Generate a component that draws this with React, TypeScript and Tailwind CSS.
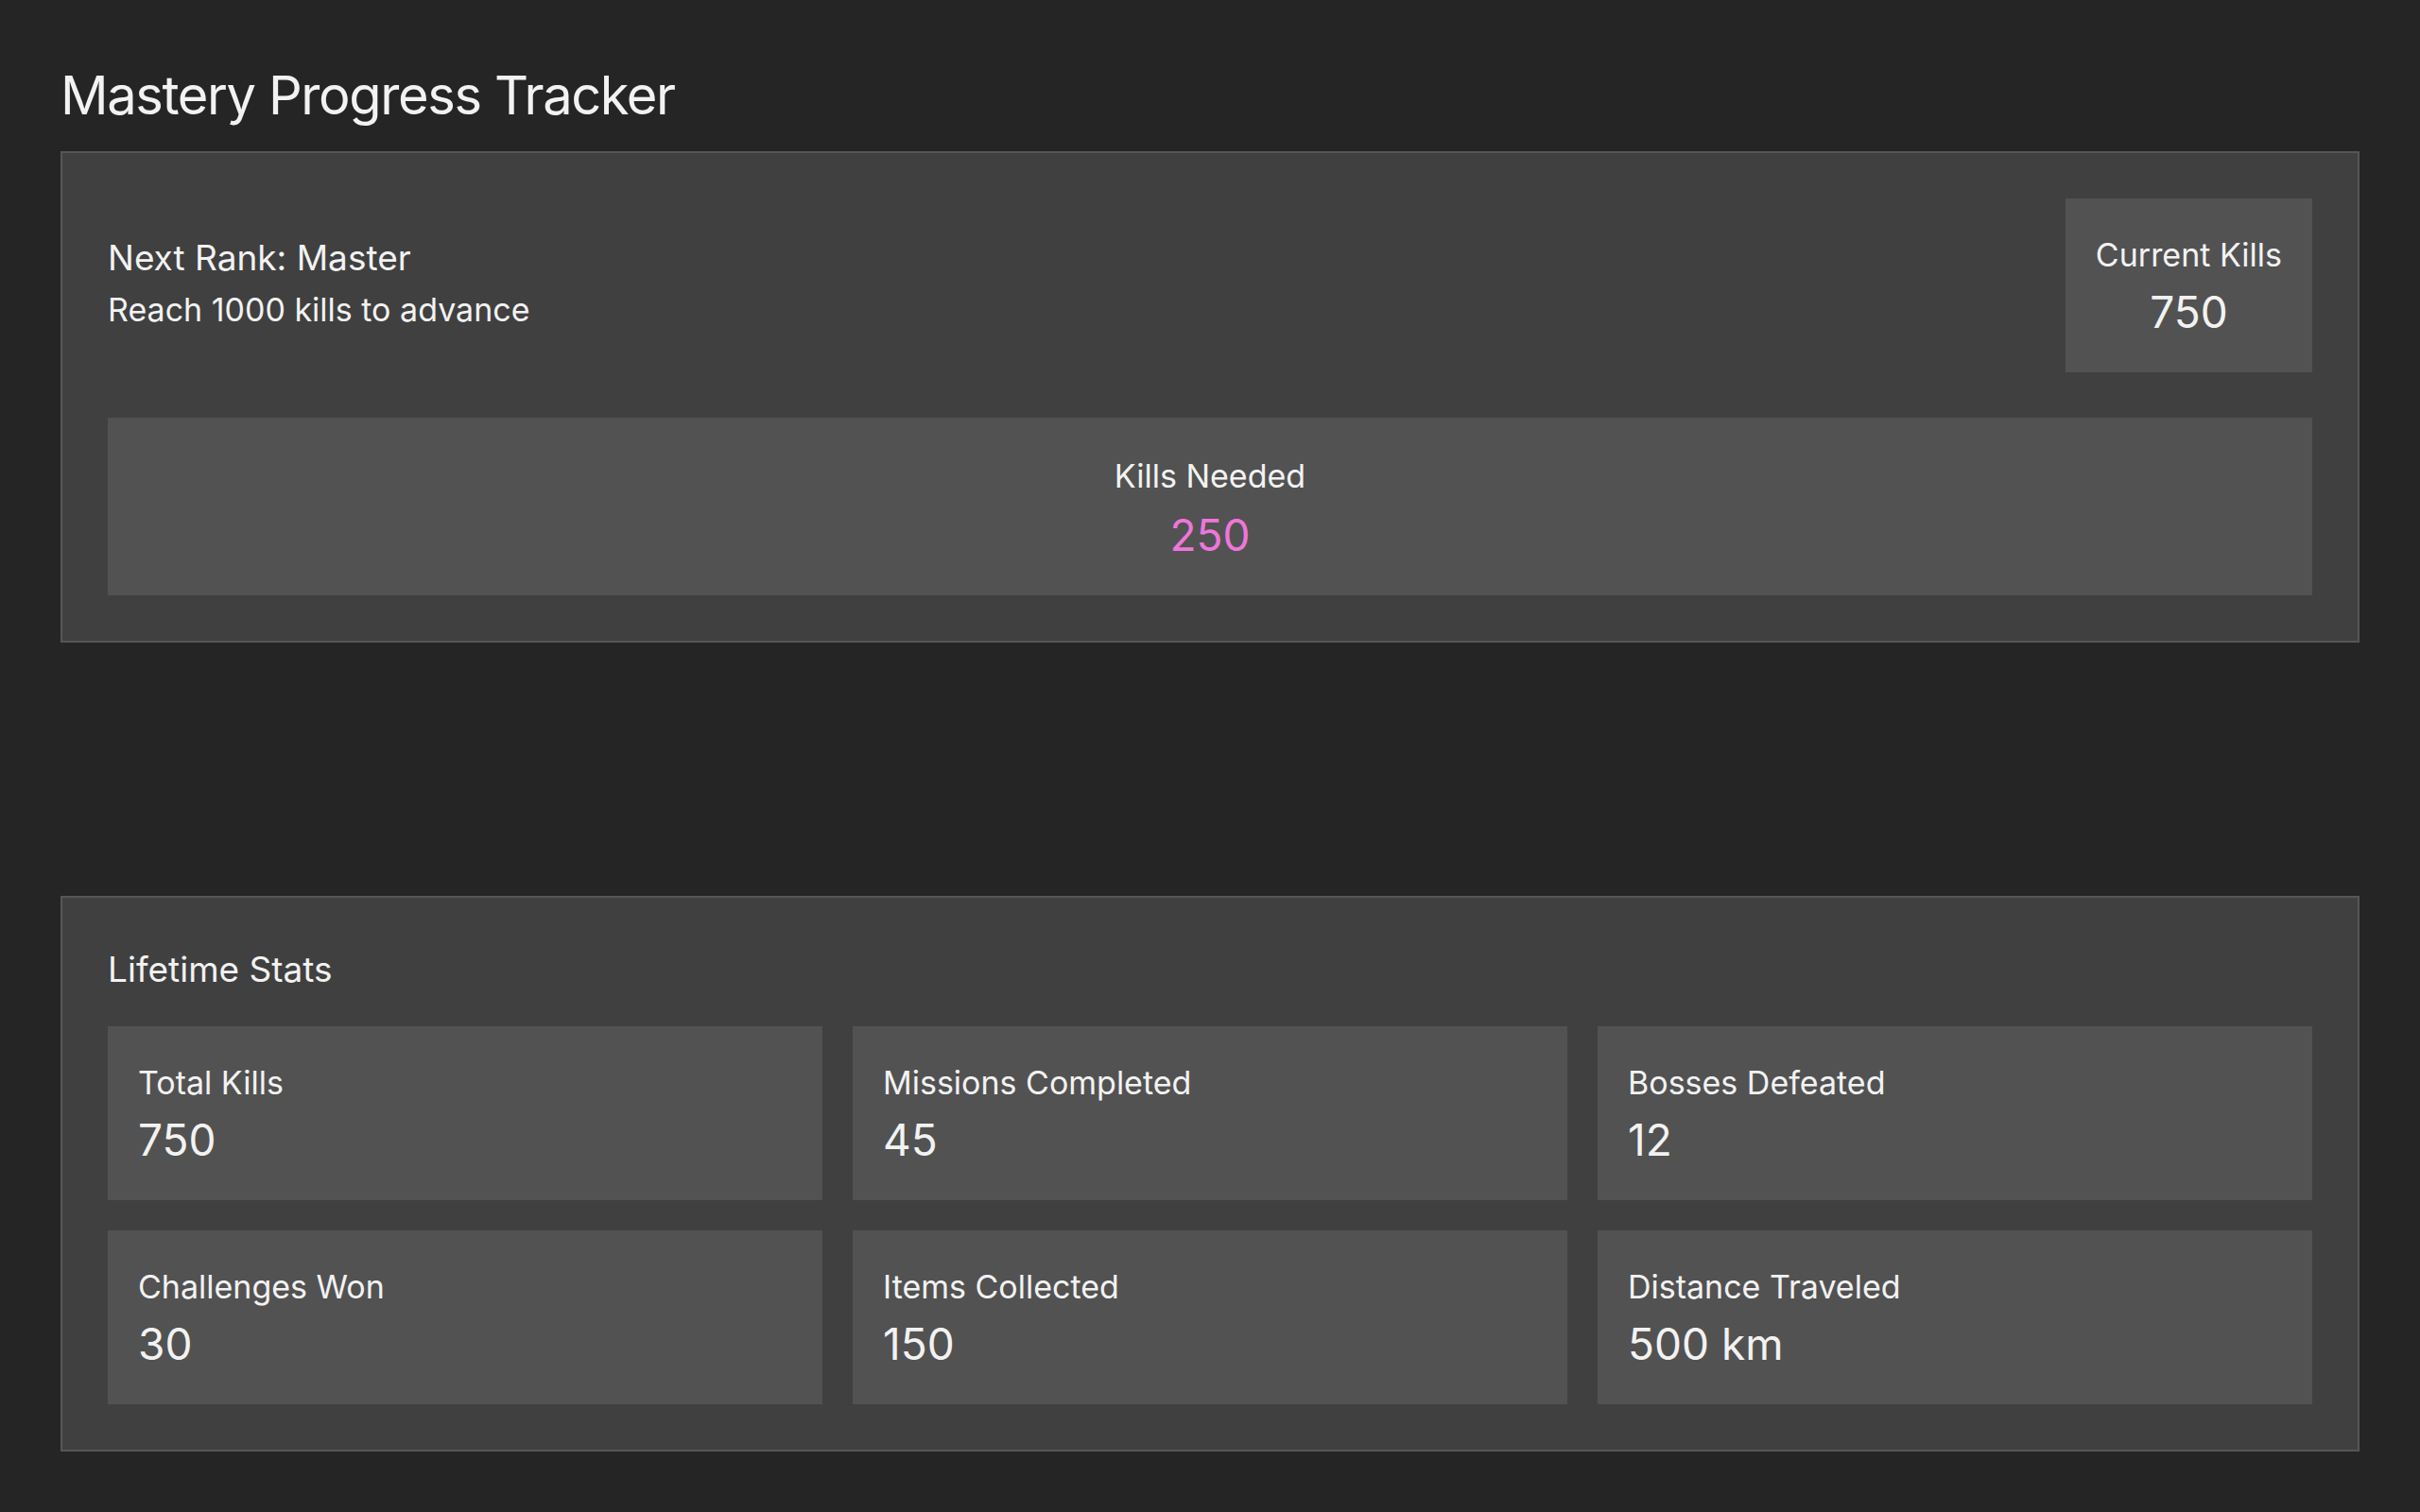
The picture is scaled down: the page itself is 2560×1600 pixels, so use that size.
const stats = [
  { label: "Total Kills", value: "750" },
  { label: "Missions Completed", value: "45" },
  { label: "Bosses Defeated", value: "12" },
  { label: "Challenges Won", value: "30" },
  { label: "Items Collected", value: "150" },
  { label: "Distance Traveled", value: "500 km" },
];

function StatBox({ label, value }: { label: string; value: string }) {
  return (
    <div className="bg-[#525252] px-8 pt-[36px] pb-[28px]">
      <p className="text-[34px] leading-[48px]">{label}</p>
      <p className="text-[46px] leading-[72px]">{value}</p>
    </div>
  );
}

export default function App() {
  return (
    <div className="min-h-screen bg-[#252525] px-16 pb-16 font-['Inter','Liberation_Sans',sans-serif] text-[#f2f2f2]">
      <h1 className="pt-[69px] mb-[27px] text-[56px] leading-[64px] font-normal tracking-[-0.025em]">
        Mastery Progress Tracker
      </h1>

      {/* Rank progress */}
      <section className="border-2 border-[#565656] bg-[#404040] p-12">
        <div className="flex items-center justify-between">
          <div>
            <p className="text-[37px] leading-[52px]">Next Rank: Master</p>
            <p className="text-[34px] leading-[58px]">Reach 1000 kills to advance</p>
          </div>
          <div className="bg-[#525252] px-8 pt-[36px] pb-[28px] text-center">
            <p className="text-[34px] leading-[48px]">Current Kills</p>
            <p className="text-[46px] leading-[72px]">750</p>
          </div>
        </div>
        <div className="mt-12 bg-[#525252] pt-[36px] pb-[28px] text-center">
          <p className="text-[34px] leading-[52px]">Kills Needed</p>
          <p className="text-[46px] leading-[72px] text-[#ee76dc]">250</p>
        </div>
      </section>

      {/* Lifetime stats */}
      <section className="mt-[268px] border-2 border-[#565656] bg-[#404040] p-12">
        <h3 className="mb-8 text-[37px] leading-[56px]">Lifetime Stats</h3>
        <div className="grid grid-cols-3 gap-8">
          {stats.map((s) => (
            <StatBox key={s.label} label={s.label} value={s.value} />
          ))}
        </div>
      </section>
    </div>
  );
}
